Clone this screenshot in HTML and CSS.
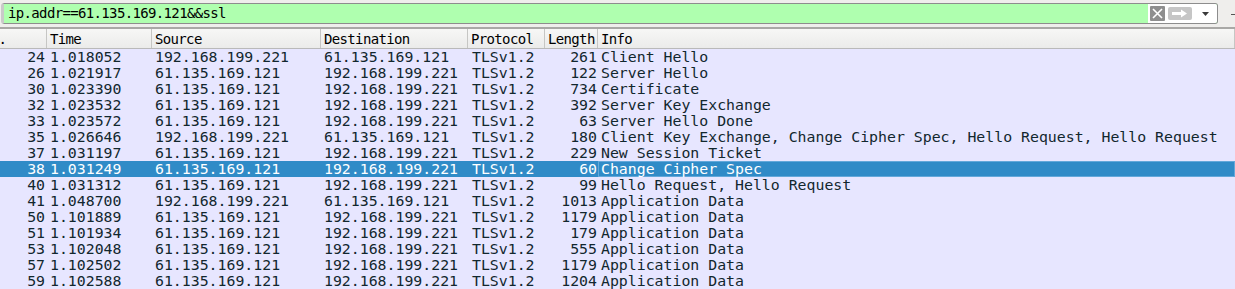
FILE: index.html
```html
<html>
<head>
    <title>Packet List</title>
    <meta charset="UTF-8">
    <link rel="stylesheet" href="styles.css">
</head>
<body>

    <div id="filter_toolbar">
        <div id="filter_box">
            <div id="filter_text">ip.addr==61.135.169.121&amp;&amp;ssl</div>
            <div id="filter_buttons">
                <svg class="clear_btn" width="15" height="15" viewBox="0 0 15 15">
                    <rect x="0" y="0" width="15" height="15" rx="1" fill="#8e8e8e"/>
                    <path d="M3 3 L12 12 M12 3 L3 12" stroke="#fff" stroke-width="1.6"/>
                </svg>
                <svg class="apply_btn" width="24" height="13" viewBox="0 0 24 13">
                    <rect x="0" y="0" width="24" height="13" rx="2" fill="#c6c6c6"/>
                    <path d="M4 5 H13 V2.5 L19 6.5 L13 10.5 V8 H4 Z" fill="#fff"/>
                </svg>
                <svg class="drop_btn" width="7" height="4" viewBox="0 0 7 4">
                    <path d="M0 0 H7 L3.5 4 Z" fill="#3a3a3a"/>
                </svg>
            </div>
        </div>
        <div id="toolbar_edge"></div>
    </div>

    <div id="packet_list">
        <div id="packet_scroll">
            <div class="packet_row header_row">
                <div class="cell">No.</div>
                <div class="cell">Time</div>
                <div class="cell">Source</div>
                <div class="cell">Destination</div>
                <div class="cell">Protocol</div>
                <div class="cell">Length</div>
                <div class="cell">Info</div>
            </div>
        </div>
    </div>

<script>
var packets = [
    [24, "1.018052", "192.168.199.221", "61.135.169.121", 261, "Client Hello"],
    [26, "1.021917", "61.135.169.121", "192.168.199.221", 122, "Server Hello"],
    [30, "1.023390", "61.135.169.121", "192.168.199.221", 734, "Certificate"],
    [32, "1.023532", "61.135.169.121", "192.168.199.221", 392, "Server Key Exchange"],
    [33, "1.023572", "61.135.169.121", "192.168.199.221", 63, "Server Hello Done"],
    [35, "1.026646", "192.168.199.221", "61.135.169.121", 180, "Client Key Exchange, Change Cipher Spec, Hello Request, Hello Request"],
    [37, "1.031197", "61.135.169.121", "192.168.199.221", 229, "New Session Ticket"],
    [38, "1.031249", "61.135.169.121", "192.168.199.221", 60, "Change Cipher Spec"],
    [40, "1.031312", "61.135.169.121", "192.168.199.221", 99, "Hello Request, Hello Request"],
    [41, "1.048700", "192.168.199.221", "61.135.169.121", 1013, "Application Data"],
    [50, "1.101889", "61.135.169.121", "192.168.199.221", 1179, "Application Data"],
    [51, "1.101934", "61.135.169.121", "192.168.199.221", 179, "Application Data"],
    [53, "1.102048", "61.135.169.121", "192.168.199.221", 555, "Application Data"],
    [57, "1.102502", "61.135.169.121", "192.168.199.221", 1179, "Application Data"],
    [59, "1.102588", "61.135.169.121", "192.168.199.221", 1204, "Application Data"]
];

var list = document.getElementById("packet_scroll");

packets.forEach(function(p){
    var row = document.createElement("div");
    row.className = "packet_row data_row";
    if (p[0] == 38) row.className += " selected";
    var cells = [p[0], p[1], p[2], p[3], "TLSv1.2", p[4], p[5]];
    cells.forEach(function(text, i){
        var cell = document.createElement("div");
        cell.className = "cell";
        if (i == 0 || i == 5) cell.className += " num";
        if (i == 6) cell.className += " info";
        cell.textContent = text;
        row.appendChild(cell);
    });
    list.appendChild(row);
});
</script>

</body>
</html>
```

FILE: styles.css
```css
body{
    margin: 0;
    overflow: hidden;
    background-color: #e7e6ff;
    font-family: "DejaVu Sans Mono", monospace;
}

#filter_toolbar{
    height: 27px;
    display: flex;
    align-items: center;
    background-color: #efeeec;
    border-bottom: 2px solid #a9a8a6;
}

#filter_box{
    display: flex;
    align-items: center;
    width: 1216px;
    height: 19px;
    margin-left: 1px;
    border: 1px solid #8d8d8d;
    border-left: 3px solid #c9c9c9;
    border-radius: 3px;
    background-color: #afffaf;
    overflow: hidden;
}

#filter_text{
    flex: 1;
    padding-left: 4px;
    font-size: 14px;
    letter-spacing: -0.65px;
    line-height: 19px;
    color: #000;
    white-space: nowrap;
}

#filter_buttons{
    display: flex;
    align-items: center;
    height: 100%;
    padding: 0 8px 0 2px;
    background-color: #fff;
}

.clear_btn{
    margin-right: 3px;
}

.drop_btn{
    margin-left: 10px;
}

#toolbar_edge{
    width: 4px;
    height: 1px;
    margin-left: 13px;
    margin-top: 2px;
    background-color: #555;
}

#packet_list{
    overflow: hidden;
}

#packet_scroll{
    margin-left: -17px;
}

.packet_row{
    display: grid;
    grid-template-columns: 64px 105px 169px 147px 77px 53px 1fr;
    white-space: nowrap;
}

.header_row{
    height: 19px;
    font-size: 14px;
    letter-spacing: -0.65px;
    line-height: 19px;
    color: #000;
    background: linear-gradient(#f7f7f6, #ebebea);
    border-bottom: 1px solid #b9b9b9;
}

.header_row .cell{
    box-sizing: border-box;
    height: 19px;
    padding-left: 3px;
    padding-top: 1px;
    border-right: 1px solid #c6c6c4;
    overflow: hidden;
}

.header_row .cell:first-child{
    padding-left: 0;
}

.data_row{
    height: 16px;
    font-size: 14.85px;
    line-height: 16px;
    color: #12272e;
    background-color: #e7e6ff;
}

.data_row .cell{
    padding-left: 3px;
    overflow: visible;
}

.data_row .num{
    text-align: right;
    padding-left: 0;
    padding-right: 2px;
}

.data_row .cell:nth-child(5){
    padding-left: 4px;
}

.data_row .num:nth-child(6){
    padding-right: 1px;
}

.selected{
    background-color: #308bc7;
    color: #ffffff;
}

.selected .info{
    box-sizing: border-box;
    padding-left: 2px;
    border: 1px solid #63a8da;
    line-height: 14px;
}
```
